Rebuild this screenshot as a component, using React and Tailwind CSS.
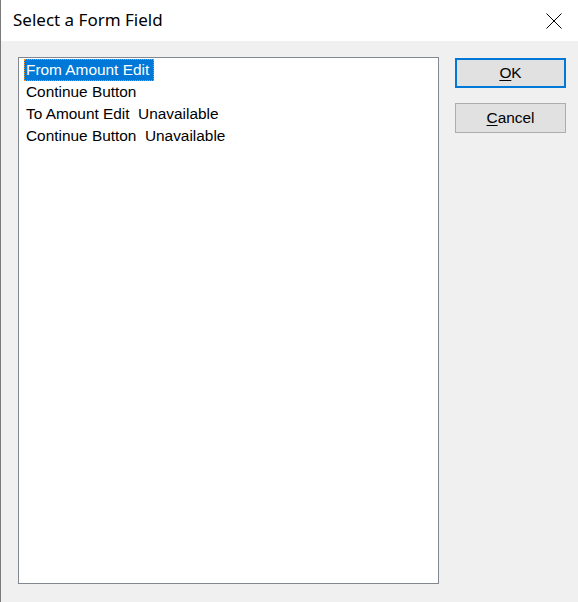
import { useState } from 'react'

const items = [
  'From Amount Edit',
  'Continue Button',
  'To Amount Edit  Unavailable',
  'Continue Button  Unavailable',
]

export default function App() {
  const [selected, setSelected] = useState(0)

  return (
    <div className="w-[578px] h-[602px] flex flex-col border-l border-[#7a7a7a] bg-[#f0f0f0] overflow-hidden">
      {/* Title bar */}
      <div className="h-[41px] bg-white flex items-center justify-between shrink-0">
        <span className="pl-[12px] pb-[1px] text-[17px] text-black font-['Noto_Sans',sans-serif]">
          Select a Form Field
        </span>
        <button className="w-[46px] h-[41px] flex items-center justify-center mr-[1px]">
          <svg width="16" height="16" viewBox="0 0 16 16" className="block">
            <path d="M0.5 0.5 L15.5 15.5 M15.5 0.5 L0.5 15.5" stroke="#000" strokeWidth="1" fill="none" />
          </svg>
        </button>
      </div>

      {/* Body */}
      <div className="flex-1 flex items-start pl-[17px] pt-[16px] gap-[16px] font-['Liberation_Sans',Arial,sans-serif] text-black">
        <div className="w-[421px] h-[527px] bg-white border border-[#828790] pt-[1px] pl-[5px]">
          {items.map((item, i) => (
            <div key={i} className="h-[22px] flex items-center">
              <span
                onClick={() => setSelected(i)}
                className={
                  i === selected
                    ? 'h-[22px] flex items-center pl-[2px] pr-[5px] bg-[#0078d7] text-white outline-1 outline-dotted outline-[#ff8c1a] -outline-offset-1 text-[15.4px] whitespace-pre'
                    : 'h-[22px] flex items-center pl-[2px] pr-[5px] text-[15.4px] whitespace-pre'
                }
              >
                {item}
              </span>
            </div>
          ))}
        </div>

        <div className="flex flex-col gap-[15px] pt-[1px]">
          <button className="w-[111px] h-[30px] bg-[#e1e1e1] border-2 border-[#0078d7] text-[15.4px] flex items-center justify-center">
            <span><span className="underline underline-offset-2">O</span>K</span>
          </button>
          <button className="w-[111px] h-[30px] bg-[#e1e1e1] border border-[#adadad] text-[15.4px] flex items-center justify-center">
            <span><span className="underline underline-offset-2">C</span>ancel</span>
          </button>
        </div>
      </div>
    </div>
  )
}
